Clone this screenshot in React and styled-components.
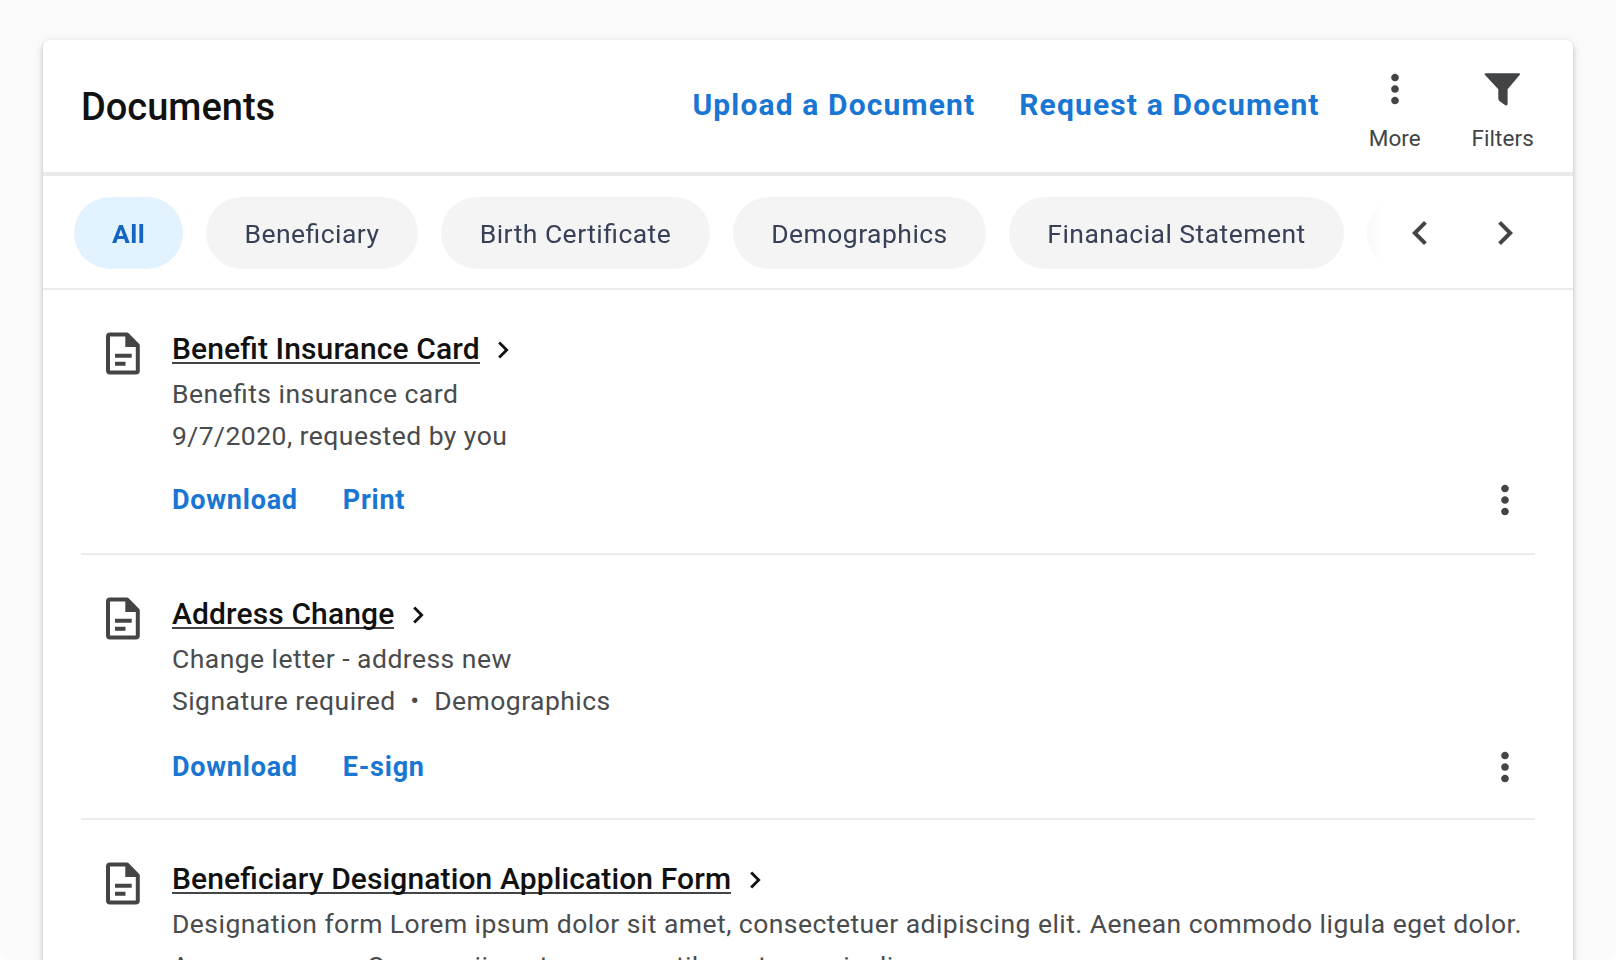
import React from "react";
import styled, { createGlobalStyle } from "styled-components";

const GlobalStyle = createGlobalStyle`
  * { box-sizing: border-box; }
  html, body { margin: 0; height: 960px; overflow: hidden; background: #fff; }
  body {
    font-family: Roboto, "Liberation Sans", sans-serif;
    font-feature-settings: "liga" 1;
    color: #111;
  }
  button { font: inherit; font-feature-settings: inherit; background: none; border: 0; padding: 0; margin: 0; }
  svg { display: block; flex: none; }
`;

const Page = styled.main`
  height: 960px;
  padding: 40px 43px 0;
  overflow: hidden;
  background: #fafafa;
  border-radius: 0 0 10px 10px;
`;

const Card = styled.section`
  height: 1100px;
  background: #fff;
  border-radius: 7px;
  box-shadow: 0 2px 4px rgba(0, 0, 0, 0.16), 0 3px 10px rgba(0, 0, 0, 0.13);
`;

const Header = styled.header`
  display: flex;
  align-items: flex-start;
  height: 136px;
  padding: 0 39px 0 38px;
  border-bottom: 4px solid #e8e9ea;
`;

const Title = styled.h1`
  flex: 1;
  margin: 0;
  font-size: 38px;
  line-height: 134px;
  font-weight: 500;
`;

const HeaderLink = styled.button`
  margin-right: ${(p) => p.$gap}px;
  line-height: 130px;
  font-size: 30px;
  font-weight: 700;
  letter-spacing: 1.14px;
  color: #1976d2;
  white-space: nowrap;
`;

const IconButton = styled.button`
  display: flex;
  flex-direction: column;
  align-items: center;
  padding-top: 26px;
  margin-left: ${(p) => p.$gap || 0}px;
  font-size: 22.5px;
  letter-spacing: 0.1px;
  line-height: 46px;
  color: #424446;
  svg { margin-bottom: 3px; }
`;

const FilterBar = styled.nav`
  display: flex;
  align-items: center;
  height: 114px;
  padding: 2px 0 0 31px;
  border-bottom: 2px solid #ececec;
`;

const ChipTrack = styled.div`
  display: flex;
  gap: 23px;
  width: 1309px;
  height: 72px;
  overflow: hidden;
  mask-image: linear-gradient(to right, #000 1284px, transparent 1309px);
`;

const Chip = styled.button`
  flex: none;
  width: ${(p) => p.$width}px;
  border-radius: 36px;
  background: ${(p) => (p.$active ? "#e3f2ff" : "#f4f4f4")};
  color: ${(p) => (p.$active ? "#1565c0" : "#374056")};
  font-size: 26.5px;
  font-weight: ${(p) => (p.$active ? 700 : 400)};
  letter-spacing: 0.46px;
`;

const Arrows = styled.div`
  display: flex;
  gap: 37px;
  margin-left: 13px;
  color: #424446;
`;

const List = styled.div`
  padding: 0 38px;
`;

const Row = styled.article`
  display: flex;
  height: 265px;
  padding: 39px 7px 0 24px;
  border-bottom: 2px solid #ececec;
`;

const Details = styled.div`
  flex: 1;
  min-width: 0;
  margin-left: 31px;
`;

const DocLink = styled.a`
  display: flex;
  align-items: center;
  gap: 6.5px;
  height: 40px;
  font-size: 30px;
  font-weight: 500;
  letter-spacing: 0.12px;
  white-space: nowrap;
  svg { margin-top: 2px; }
`;

const DocName = styled.span`
  height: 30px;
  margin: 1px 0;
  line-height: 30px;
  border-bottom: 2px solid #424446;
`;

const Meta = styled.p`
  margin: 4px 0 0;
  font-size: 26.5px;
  line-height: 42px;
  letter-spacing: 0.46px;
  color: #494b4c;
  white-space: pre;
`;

const Dot = styled.span`
  display: inline-block;
  width: 38.5px;
  text-align: center;
`;

const Actions = styled.div`
  display: flex;
  align-items: center;
  justify-content: space-between;
  height: 44px;
  margin-top: ${(p) => p.$top}px;
  color: #424446;
  svg { margin-top: -1px; }
`;

const Links = styled.div`
  display: flex;
  gap: 45px;
`;

const ActionLink = styled.button`
  font-size: 27px;
  font-weight: 700;
  letter-spacing: 0.75px;
  color: #1976d2;
`;

const FileGlyph = styled.svg`
  margin-top: 2px;
`;

const MoreIcon = ({ size = 46 }) => (
  <svg width={size} height={size} viewBox="0 0 24 24" fill="currentColor">
    <path d="M12 8c1.1 0 2-.9 2-2s-.9-2-2-2-2 .9-2 2 .9 2 2 2zm0 2c-1.1 0-2 .9-2 2s.9 2 2 2 2-.9 2-2-.9-2-2-2zm0 6c-1.1 0-2 .9-2 2s.9 2 2 2 2-.9 2-2-.9-2-2-2z" />
  </svg>
);

const FilterIcon = () => (
  <svg width="46" height="46" viewBox="0.7 0 46 46" fill="currentColor">
    <path d="M6.700 7.300H39.300Q41.800 7.300 40.100 9.300L28.300 23.300V37.500Q28.300 40.200 26 39.300L20.800 35.600Q19 34.300 19 32.500V23.300L6 9.300Q4.200 7.300 6.700 7.300Z" />
  </svg>
);

const Chevron = ({ size, left }) => (
  <svg width={size} height={size} viewBox="0 0 24 24" fill="currentColor">
    {left ? (
      <path d="M15.410 7.410L14 6l-6 6 6 6 1.410-1.410L10.830 12z" />
    ) : (
      <path d="M10 6L8.590 7.410 13.170 12l-4.580 4.590L10 18l6-6z" />
    )}
  </svg>
);

const DocumentIcon = () => (
  <FileGlyph width="36" height="44" viewBox="0 -0.5 36 44" fill="none">
    <path d="M5 2.900H22L32.800 13.800V39Q32.800 41 30.800 41H5Q3 41 3 39V4.900Q3 2.900 5 2.900Z" stroke="#424446" strokeWidth="4" strokeLinejoin="round" />
    <path d="M20.300 2H23L34 14V15.500H20.300ZM10 22.200H26.700V26.200H10ZM10 30.200H20.500V34.200H10Z" fill="#424446" />
  </FileGlyph>
);

const chips = [
  { label: "All", width: 109, active: true },
  { label: "Beneficiary", width: 212 },
  { label: "Birth Certificate", width: 269 },
  { label: "Demographics", width: 253 },
  { label: "Finanacial Statement", width: 335 },
  { label: "", width: 150 },
];

const documents = [
  {
    name: "Benefit Insurance Card",
    meta: "Benefits insurance card\n9/7/2020, requested by you",
    actions: ["Download", "Print"],
    actionsTop: 21,
  },
  {
    name: "Address Change",
    meta: (
      <>
        Change letter - address new{"\n"}Signature required<Dot>•</Dot>Demographics
      </>
    ),
    actions: ["Download", "E-sign"],
    actionsTop: 23,
  },
  {
    name: "Beneficiary Designation Application Form",
    meta: "Designation form Lorem ipsum dolor sit amet, consectetuer adipiscing elit. Aenean commodo ligula eget dolor.\nAenean massa. Cum sociis natoque penatibus et magnis dis",
    actions: [],
    actionsTop: 0,
  },
];

function DocumentRow({ doc }) {
  return (
    <Row>
      <DocumentIcon />
      <Details>
        <DocLink>
          <DocName>{doc.name}</DocName>
          <Chevron size={34} />
        </DocLink>
        <Meta>{doc.meta}</Meta>
        {doc.actions.length > 0 && (
          <Actions $top={doc.actionsTop}>
            <Links>
              {doc.actions.map((a) => (
                <ActionLink key={a}>{a}</ActionLink>
              ))}
            </Links>
            <MoreIcon size={46} />
          </Actions>
        )}
      </Details>
    </Row>
  );
}

export default function App() {
  return (
    <Page>
      <GlobalStyle />
      <Card>
        <Header>
          <Title>Documents</Title>
          <HeaderLink $gap={44}>Upload a Document</HeaderLink>
          <HeaderLink $gap={49}>Request a Document</HeaderLink>
          <IconButton>
            <MoreIcon />
            More
          </IconButton>
          <IconButton $gap={50.5}>
            <FilterIcon />
            Filters
          </IconButton>
        </Header>
        <FilterBar>
          <ChipTrack>
            {chips.map((c) => (
              <Chip key={c.label} $width={c.width} $active={c.active}>
                {c.label}
              </Chip>
            ))}
          </ChipTrack>
          <Arrows>
            <Chevron size={48} left />
            <Chevron size={48} />
          </Arrows>
        </FilterBar>
        <List>
          {documents.map((d) => (
            <DocumentRow key={d.name} doc={d} />
          ))}
        </List>
      </Card>
    </Page>
  );
}
